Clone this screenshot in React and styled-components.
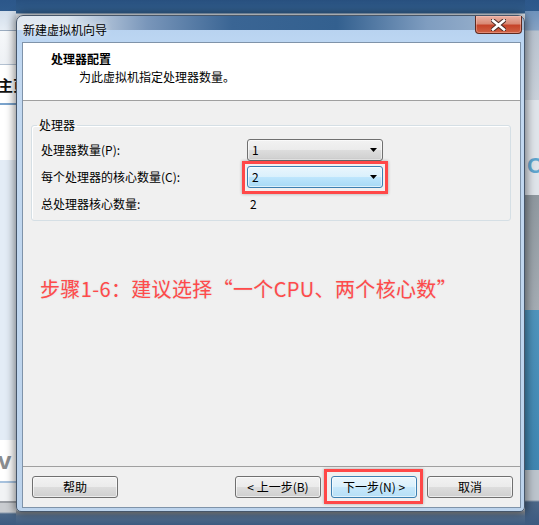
import styled, { createGlobalStyle } from "styled-components"

const GlobalStyle = createGlobalStyle`
  *, *::before, *::after { box-sizing: border-box; }
  html, body { margin: 0; padding: 0; background: #2f5b8d; }
  body { font-family: "Noto Sans CJK SC", "Liberation Sans", sans-serif; }
`

const Desktop = styled.div`
  position: relative;
  width: 539px;
  height: 525px;
  overflow: hidden;
  display: grid;
  grid-template-columns: 16px 1fr 14px;
  background: linear-gradient(to bottom, #28507f 0, #33608f 13px, #e9eef4 14px, #e9eef4 506px, #8a9098 512px, #56708f 516px, #3c5a80 100%);
`

const LeftPane = styled.div`
  display: flex;
  flex-direction: column;
  padding-top: 75px;
  background: linear-gradient(to bottom,
    #2c578a 0, #2f5b8d 11px, #d2deeb 11px, #e6edf5 30px, #9aabbf 30px, #9aabbf 31px,
    #f6f8fa 31px, #eef1f5 64px, #b3c1d1 64px, #b3c1d1 65px, #ffffff 65px, #ffffff 103px,
    #7aa3cc 103px, #7aa3cc 105px, #ffffff 105px, #ffffff 160px, #e3ecf6 160px, #e3ecf6 440px,
    #ffffff 440px, #ffffff 481px, #a7c2de 481px, #a7c2de 483px, #f1f3f5 483px, #f1f3f5 501px,
    #9a9ea4 501px, #9a9ea4 503px, #c9ccd0 503px, #c9ccd0 512px, #4b6788 514px, #3c5a80 100%);
`

const HomeLabel = styled.span`
  margin-left: -2px;
  font-size: 15px;
  line-height: 20px;
  font-weight: 700;
  color: #111;
  white-space: nowrap;
`

const LogoBit = styled.span`
  margin: auto 0 52px -2px;
  font-size: 24px;
  line-height: 24px;
  font-weight: 700;
  color: #8b8d90;
  font-family: "Liberation Sans", sans-serif;
`

const RightPane = styled.div`
  display: flex;
  flex-direction: column;
  padding-top: 154px;
  background: linear-gradient(to bottom,
    #2c578a 0, #2f5b8d 11px, #6f92bb 11px, #86a3c5 30px, #b9c3cf 31px, #c9d1da 100px,
    #dfe4ea 100px, #dfe4ea 195px, #8f989f 195px, #a4acb3 310px, #4f93bb 310px, #3f86b1 470px,
    #bcc4cc 470px, #bcc4cc 500px, #4b6788 502px, #3c5a80 100%);
`

const LogoRing = styled.span`
  margin-left: 2px;
  font-size: 22px;
  line-height: 24px;
  font-weight: 700;
  color: #5fa6cf;
  font-family: "Liberation Sans", sans-serif;
`

const Dialog = styled.div`
  position: absolute;
  left: 16px;
  top: 15px;
  width: 509px;
  height: 497px;
  display: flex;
  flex-direction: column;
  padding: 0 3px 3px 5px;
  border: 1px solid #46566a;
  border-radius: 7px 7px 5px 5px;
  box-shadow: 0 0 9px 2px rgba(0, 0, 0, 0.45);
  background:
    linear-gradient(90deg, #e2e9f1 0, #dae4ef 50px, #7996ba 130px, #3a6594 215px, #33608f 320px, #7f9dc0 410px, #a3b9d2 100%) top / 100% 14px no-repeat,
    linear-gradient(to bottom, #b4cfee 0, #bcd6f2 26px, #c3d9f1 60px, #bcd3ec 100%);
`

const TitleBar = styled.div`
  height: 26px;
  display: flex;
  align-items: flex-start;
  justify-content: space-between;
`

const TitleText = styled.span`
  align-self: center;
  margin: 1px 0 0 1px;
  font-size: 12px;
  line-height: 16px;
  color: #000;
  text-shadow: 0 0 6px rgba(255, 255, 255, 0.9);
`

const CloseButton = styled.div`
  width: 47px;
  height: 18px;
  margin-right: -1px;
  display: flex;
  align-items: center;
  justify-content: center;
  border: 1px solid #5e2a20;
  border-top: none;
  border-radius: 0 0 4px 4px;
  background: linear-gradient(to bottom, #eab1a3 0, #d98a76 45%, #c6442a 55%, #cf6244 100%);
  box-shadow: inset 0 0 0 1px rgba(255, 200, 190, 0.4);
`

const Client = styled.div`
  flex: 1;
  display: flex;
  flex-direction: column;
  border: 1px solid #7f93a9;
  background: #f0f0f0;
  font-size: 12px;
  color: #000;
`

const Header = styled.div`
  height: 58px;
  padding: 8px 0 0 28px;
  background: #fff;
  border-bottom: 1px solid #a0a0a0;
`

const HeaderTitle = styled.div`
  font-weight: 700;
  line-height: 16px;
`

const HeaderSub = styled.div`
  margin: 2px 0 0 28px;
  line-height: 16px;
`

const Body = styled.div`
  flex: 1;
  padding: 17px 9px 0 8px;
`

const Group = styled.fieldset`
  margin: 0;
  padding: 0;
  border: 1px solid #d5dfe5;
  border-radius: 3px;
  box-shadow: inset 1px 1px 0 #fff;
`

const Legend = styled.legend`
  margin-left: 5px;
  padding: 0 2px;
  font-size: 12px;
  line-height: 14px;
`

const Rows = styled.div`
  display: grid;
  grid-template-columns: 206px 136px;
  grid-auto-rows: 27px;
  align-items: center;
  padding: 4px 0 3px 9px;
`

const Label = styled.span`
  line-height: 16px;
  white-space: nowrap;
`

const Value = styled.span`
  padding-left: 3px;
  line-height: 16px;
`

const Combo = styled.div`
  height: 22px;
  display: flex;
  align-items: center;
  justify-content: space-between;
  padding: 0 5px 0 4px;
  border: 1px solid ${(p) => (p.$active ? "#3c7fb1" : "#707070")};
  border-radius: 3px;
  background: ${(p) =>
    p.$active
      ? "linear-gradient(to bottom, #eaf6fd 0, #d9f0fc 50%, #bee6fd 50%, #a7d9f5 100%)"
      : "linear-gradient(to bottom, #f2f2f2 0, #ebebeb 50%, #dddddd 50%, #cfcfcf 100%)"};
  box-shadow: inset 0 0 0 1px rgba(255, 255, 255, 0.6);
`

const Marked = styled.div`
  position: relative;
  &::after {
    content: "";
    position: absolute;
    inset: ${(p) => p.$inset};
    border: 3px solid #ff4848;
    box-shadow: 0 0 3px rgba(0, 0, 0, 0.3);
    pointer-events: none;
  }
`

const Note = styled.div`
  margin: 54px 0 0 9px;
  font-size: 20px;
  line-height: 28px;
  letter-spacing: 0.35px;
  color: #ff4a4a;
  text-shadow: 0 0 2px rgba(0, 0, 0, 0.12);
  white-space: nowrap;
`

const Footer = styled.div`
  height: 41px;
  display: flex;
  align-items: flex-start;
  padding: 9px 7px 0 9px;
  border-top: 1px solid #a0a0a0;
`

const NavGroup = styled.div`
  margin-left: auto;
  display: flex;
  gap: 10px;
`

const Button = styled.div`
  width: 86px;
  height: 22px;
  display: flex;
  align-items: center;
  justify-content: center;
  line-height: 16px;
  border: 1px solid ${(p) => (p.$primary ? "#3c7fb1" : "#707070")};
  border-radius: 3px;
  background: ${(p) =>
    p.$primary
      ? "linear-gradient(to bottom, #eaf6fd 0, #d9f0fc 50%, #c7e8fb 50%, #b6dff6 100%)"
      : "linear-gradient(to bottom, #f2f2f2 0, #ebebeb 50%, #dddddd 50%, #cfcfcf 100%)"};
  box-shadow: inset 0 0 0 1px rgba(255, 255, 255, 0.6);
  white-space: nowrap;
`

function Arrow() {
  return (
    <svg width="7" height="4" viewBox="0 0 7 4">
      <polygon points="0,0 7,0 3.5,4" fill="#000" />
    </svg>
  )
}

function CloseIcon() {
  return (
    <svg width="15" height="12" viewBox="0 0 15 12">
      <path d="M2 1.5 L13 10.5 M13 1.5 L2 10.5" stroke="#4a2a26" strokeWidth="4.6" strokeLinecap="square" />
      <path d="M2 1.5 L13 10.5 M13 1.5 L2 10.5" stroke="#ffffff" strokeWidth="2.6" strokeLinecap="square" />
    </svg>
  )
}

export default function App() {
  return (
    <>
      <GlobalStyle />
      <Desktop>
        <LeftPane>
          <HomeLabel>主页</HomeLabel>
          <LogoBit>v</LogoBit>
        </LeftPane>
        <div />
        <RightPane>
          <LogoRing>O</LogoRing>
        </RightPane>

        <Dialog>
          <TitleBar>
            <TitleText>新建虚拟机向导</TitleText>
            <CloseButton>
              <CloseIcon />
            </CloseButton>
          </TitleBar>
          <Client>
            <Header>
              <HeaderTitle>处理器配置</HeaderTitle>
              <HeaderSub>为此虚拟机指定处理器数量。</HeaderSub>
            </Header>
            <Body>
              <Group>
                <Legend>处理器</Legend>
                <Rows>
                  <Label>处理器数量(P):</Label>
                  <Combo>
                    <span>1</span>
                    <Arrow />
                  </Combo>
                  <Label>每个处理器的核心数量(C):</Label>
                  <Marked $inset="-5px -5px -6px -5px">
                    <Combo $active>
                      <span>2</span>
                      <Arrow />
                    </Combo>
                  </Marked>
                  <Label>总处理器核心数量:</Label>
                  <Value>2</Value>
                </Rows>
              </Group>
              <Note>步骤1-6：建议选择“一个CPU、两个核心数”</Note>
            </Body>
            <Footer>
              <Button>帮助</Button>
              <NavGroup>
                <Button>&lt; 上一步(B)</Button>
                <Marked $inset="-7px -6px -6px -7px">
                  <Button $primary>下一步(N) &gt;</Button>
                </Marked>
                <Button>取消</Button>
              </NavGroup>
            </Footer>
          </Client>
        </Dialog>
      </Desktop>
    </>
  )
}
